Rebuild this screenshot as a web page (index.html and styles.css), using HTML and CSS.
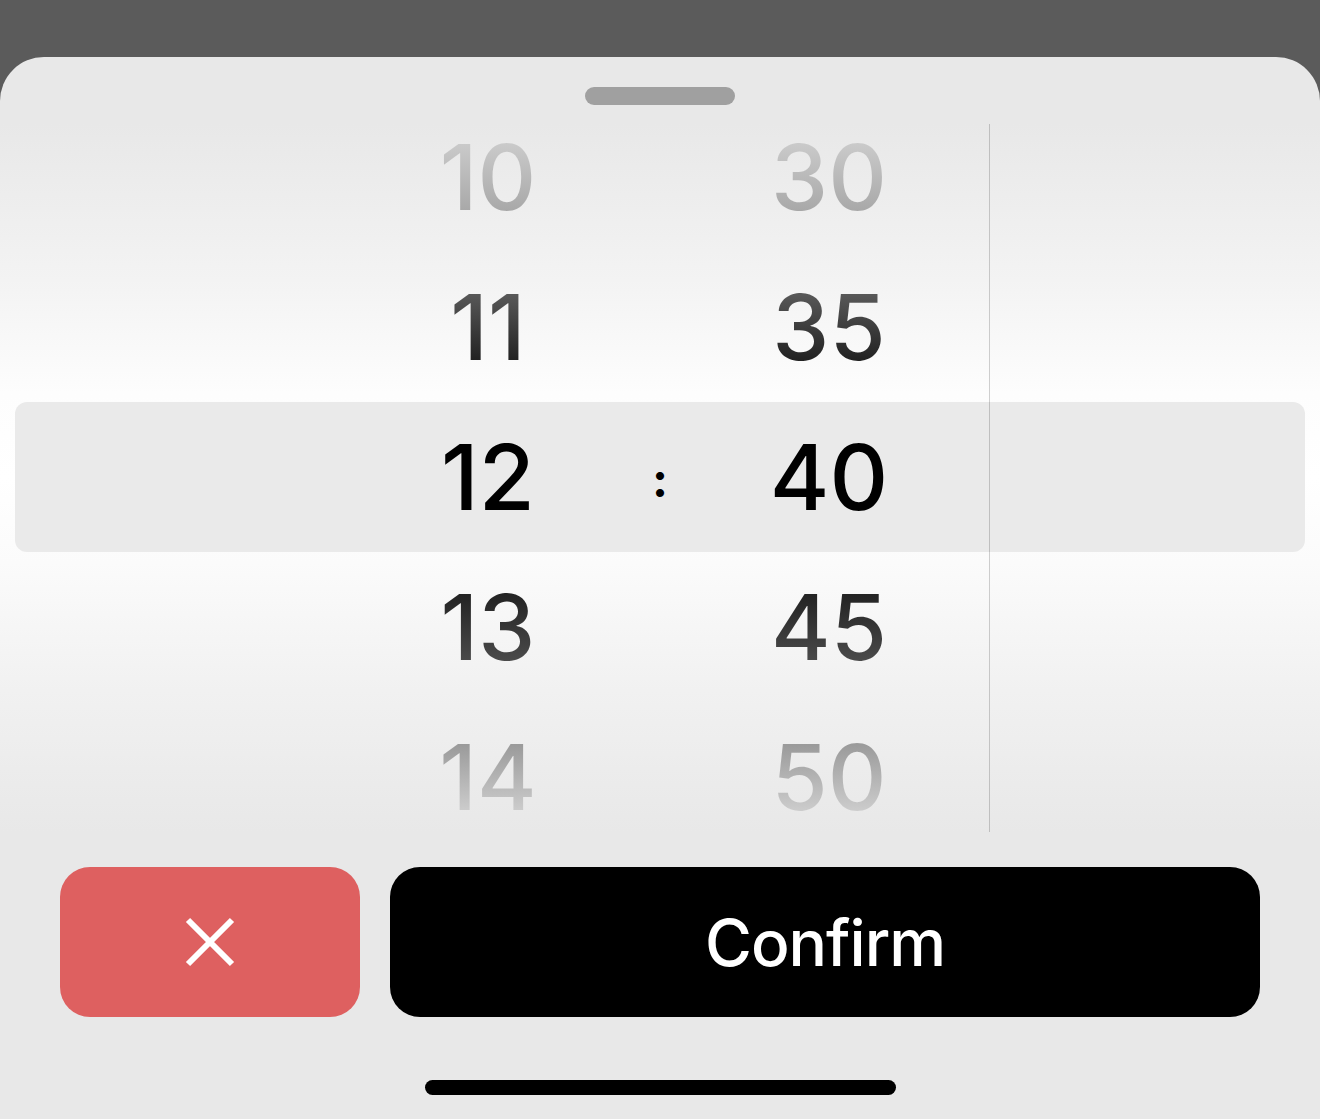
FILE: index.html
```html
<!DOCTYPE html>
<html lang="en">
<head>
<meta charset="utf-8">
<title>Time picker</title>
<link rel="stylesheet" href="styles.css">
</head>
<body>
<div class="sheet">
  <div class="grabber"></div>
  <div class="picker">
    <div class="band"></div>
    <div class="cols">
      <div class="spacer"></div>
      <div class="col hours">
        <div class="row first">10</div>
        <div class="row">11</div>
        <div class="row">12</div>
        <div class="row">13</div>
        <div class="row last">14</div>
      </div>
      <div class="colon">:</div>
      <div class="col minutes">
        <div class="row first">30</div>
        <div class="row">35</div>
        <div class="row">40</div>
        <div class="row">45</div>
        <div class="row last">50</div>
      </div>
      <div class="extra"></div>
    </div>
  </div>
  <div class="actions">
    <button class="btn cancel" aria-label="Cancel">
      <svg width="52" height="52" viewBox="0 0 52 52"><path d="M4 4 L48 48 M48 4 L4 48" stroke="#fff" stroke-width="6" fill="none"/></svg>
    </button>
    <button class="btn confirm">Confirm</button>
  </div>
  <div class="home"></div>
</div>
</body>
</html>
```
FILE: styles.css
```css
html, body {
  margin: 0;
  padding: 0;
}
body {
  background: #5b5b5b;
  height: 1119px;
  overflow: hidden;
  font-family: Inter, "Liberation Sans", sans-serif;
}
.sheet {
  margin-top: 57px;
  height: 1062px;
  background: #e8e8e8;
  border-radius: 44px 44px 0 0;
  display: flex;
  flex-direction: column;
  align-items: center;
}
.grabber {
  margin-top: 30px;
  width: 150px;
  height: 18px;
  border-radius: 9px;
  background: #a0a0a0;
}
.picker {
  margin-top: 19px;
  width: 100%;
  height: 708px;
  position: relative;
  background: linear-gradient(to bottom, #e8e8e8 0%, #f3f3f3 22%, #fdfdfd 38%, #ffffff 50%, #fbfbfb 62%, #f1f1f1 80%, #e8e8e8 100%);
}
.band {
  position: absolute;
  left: 15px;
  right: 15px;
  top: 278px;
  height: 150px;
  border-radius: 12px;
  background: #eaeaea;
}
.cols {
  position: relative;
  display: grid;
  grid-template-columns: 388px 200px 144px 194px 1fr;
  height: 100%;
  align-items: start;
}
.col {
  display: flex;
  flex-direction: column;
  background: linear-gradient(to bottom,
    #cbcbcb 18px,
    #a9a9a9 85px,
    #585858 170px,
    #232323 235px,
    #000000 278px,
    #000000 428px,
    #232323 470px,
    #494949 535px,
    #9a9a9a 620px,
    #cdcdcd 688px);
  -webkit-background-clip: text;
  background-clip: text;
  color: transparent;
}
.row {
  height: 150px;
  line-height: 150px;
  font-size: 91px;
  font-weight: 500;
  text-align: center;
  color: transparent;
}
.row.first {
  height: 106px;
  line-height: 106px;
  padding-bottom: 22px;
}
.row.last {
  height: 106px;
  line-height: 106px;
  padding-top: 22px;
}
.colon {
  align-self: center;
  text-align: center;
  font-size: 48px;
  font-weight: 700;
  line-height: 150px;
  color: #000;
  padding-top: 3px;
}
.extra {
  align-self: stretch;
  margin-left: 63px;
  border-left: 1px solid rgba(0, 0, 0, 0.18);
}
.actions {
  margin-top: 35px;
  width: 1200px;
  display: flex;
  gap: 30px;
}
.btn {
  height: 150px;
  border: none;
  border-radius: 30px;
  padding: 0;
  display: flex;
  align-items: center;
  justify-content: center;
  font-family: Inter, "Liberation Sans", sans-serif;
}
.cancel {
  width: 300px;
  background: #de6060;
}
.confirm {
  flex: 1;
  background: #000;
  color: #fff;
  font-size: 64px;
  font-weight: 500;
  letter-spacing: -1px;
}
.home {
  margin-top: 63px;
  width: 471px;
  height: 15px;
  border-radius: 8px;
  background: #000;
}
```
